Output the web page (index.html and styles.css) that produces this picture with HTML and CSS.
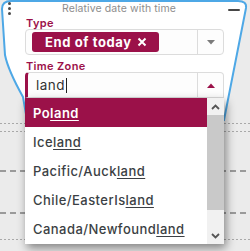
FILE: index.html
```html
<!DOCTYPE html>
<html lang="en">
<head>
<meta charset="utf-8">
<title>Relative date with time</title>
<link rel="stylesheet" href="styles.css">
</head>
<body>
<div class="stage">
  <svg class="backdrop" width="250" height="251" viewBox="0 0 250 251" aria-hidden="true">
    <g class="guides">
      <line class="dot" x1="0" y1="123.5" x2="250" y2="123.5"/>
      <line class="dot" x1="0" y1="131.5" x2="250" y2="131.5"/>
      <line class="dash" x1="0" y1="171" x2="250" y2="171"/>
      <line class="dash" x1="0" y1="213" x2="250" y2="213"/>
      <line class="dot" x1="0" y1="239.5" x2="250" y2="239.5"/>
    </g>
    <path class="card-shape" d="M 11 1 L 238 1 Q 247 1 246 8 L 224 120 L 27 120 L 23 97 Q 8 70 5 55 L 2 9 Q 2 1 11 1 Z"/>
  </svg>

  <div class="card">
    <div class="card-head">
      <span class="handle"><i></i><i></i><i></i></span>
      <span class="title">Relative date with time</span>
      <span class="minimize"></span>
    </div>

    <div class="card-body">
      <div class="field-label">Type</div>
      <div class="select">
        <div class="select-value">
          <span class="chip">End of today
            <svg class="chip-x" width="10" height="10" viewBox="0 0 10 10"><path d="M1.5 1.5 L8.5 8.5 M8.5 1.5 L1.5 8.5"/></svg>
          </span>
        </div>
        <div class="select-arrow">
          <svg width="10" height="5" viewBox="0 0 10 5"><path class="tri-grey" d="M1 0 H9 L5 4.5 Z"/></svg>
        </div>
      </div>

      <div class="field-label">Time Zone</div>
      <div class="combo">
        <div class="select is-open">
          <div class="select-value">
            <span class="input-text">land</span><span class="caret"></span>
          </div>
          <div class="select-arrow">
            <svg width="10" height="5" viewBox="0 0 10 5"><path class="tri-red" d="M1 5 H9 L5 0.5 Z"/></svg>
          </div>
        </div>

        <div class="dropdown">
          <ul class="options">
            <li class="option is-active">Po<u>land</u></li>
            <li class="option">Ice<u>land</u></li>
            <li class="option">Pacific/Auck<u>land</u></li>
            <li class="option">Chile/EasterIs<u>land</u></li>
            <li class="option">Canada/Newfound<u>land</u></li>
          </ul>
          <div class="scrollbar">
            <div class="sb-btn">
              <svg width="9" height="6" viewBox="0 0 9 6"><path d="M1 5 L4.5 1.5 L8 5"/></svg>
            </div>
            <div class="sb-track"><div class="sb-thumb"></div></div>
            <div class="sb-btn">
              <svg width="9" height="6" viewBox="0 0 9 6"><path d="M1 1 L4.5 4.5 L8 1"/></svg>
            </div>
          </div>
        </div>
      </div>
    </div>
  </div>
</div>
</body>
</html>
```

FILE: styles.css
```css
* { box-sizing: border-box; }

html, body {
  margin: 0;
  padding: 0;
}

body {
  width: 250px;
  height: 251px;
  overflow: hidden;
  background: #ebebeb;
  font-family: "Inter", "DejaVu Sans", sans-serif;
  color: #3b3f44;
}

.stage {
  position: relative;
  width: 250px;
  height: 251px;
}

.backdrop {
  position: absolute;
  left: 0;
  top: 0;
}

.guides .dot {
  stroke: #a9a9a9;
  stroke-width: 1;
  stroke-dasharray: 2 2;
}

.guides .dash {
  stroke: #9a9a9a;
  stroke-width: 2;
  stroke-dasharray: 6 4;
}

.card-shape {
  fill: #ffffff;
  stroke: #4ea8e6;
  stroke-width: 2;
}

.card {
  position: relative;
  width: 250px;
}

.card-head {
  display: grid;
  grid-template-columns: 1fr auto 1fr;
  align-items: center;
  height: 17px;
  padding: 0 10px 0 8px;
}

.handle {
  display: flex;
  flex-direction: column;
  gap: 2px;
  width: 4px;
  justify-self: start;
}

.handle i {
  display: block;
  width: 3px;
  height: 3px;
  border-radius: 50%;
  background: #4a4a4a;
}

.title {
  font-size: 10.5px;
  color: #8d8d8d;
  letter-spacing: 0.1px;
  padding-right: 10px;
}

.minimize {
  justify-self: end;
  width: 12px;
  height: 2px;
  background: #474747;
  border-radius: 1px;
  margin-top: 2px;
}

.card-body {
  padding: 0 26px 0 25px;
}

.field-label {
  font-size: 11px;
  font-weight: 600;
  color: #9b1149;
  height: 12px;
  line-height: 12px;
  padding-left: 1px;
  letter-spacing: 0.35px;
}

.select {
  display: flex;
  height: 26px;
  border: 1px solid #dcdcdc;
  border-radius: 4px;
  background: #fdfdfd;
  margin-bottom: 5px;
}

.select-value {
  flex: 1;
  display: flex;
  align-items: center;
  padding-left: 6px;
}

.select-arrow {
  width: 26px;
  border-left: 1px solid #dcdcdc;
  display: flex;
  align-items: center;
  justify-content: center;
}

.tri-grey { fill: #7b7b7b; }
.tri-red { fill: #9b1149; }

.chip {
  display: inline-flex;
  align-items: center;
  gap: 5px;
  height: 20px;
  padding: 0 12px 0 13px;
  border-radius: 3px;
  background: #9b1149;
  color: #fff;
  font-size: 13px;
  font-weight: 700;
  letter-spacing: 0.6px;
}

.chip-x path {
  stroke: #fff;
  stroke-width: 2;
  fill: none;
}

.combo {
  position: relative;
}

.select.is-open {
  border-left: 3px solid #9b1149;
  border-radius: 4px 4px 0 0;
  margin-bottom: 0;
}

.select.is-open .select-value {
  padding-left: 8px;
}

.input-text {
  font-size: 13.5px;
  color: #333;
  letter-spacing: 0.5px;
}

.caret {
  display: inline-block;
  width: 1px;
  height: 15px;
  background: #222;
  margin-left: 1px;
}

.dropdown {
  position: absolute;
  left: 0;
  top: 26px;
  width: 199px;
  height: 146px;
  display: flex;
  background: #fff;
  box-shadow: 2px 4px 9px rgba(0, 0, 0, 0.45);
}

.options {
  list-style: none;
  margin: 0;
  padding: 0;
  flex: 1;
}

.option {
  height: 29px;
  display: flex;
  align-items: center;
  padding-left: 8px;
  font-size: 13px;
  font-weight: 500;
  letter-spacing: 0.45px;
  color: #3b3f44;
}

.option u {
  text-decoration-thickness: 1px;
  text-underline-offset: 2px;
}

.option.is-active {
  background: #9b1149;
  color: #fff;
  font-weight: 600;
}

.scrollbar {
  width: 17px;
  display: flex;
  flex-direction: column;
  background: #f1f1f1;
}

.sb-btn {
  height: 17px;
  display: flex;
  align-items: center;
  justify-content: center;
}

.sb-btn path {
  stroke: #555;
  stroke-width: 1.8;
  fill: none;
}

.sb-track {
  flex: 1;
  padding-bottom: 17px;
}

.sb-thumb {
  height: 100%;
  background: #c9c9c9;
}
```
